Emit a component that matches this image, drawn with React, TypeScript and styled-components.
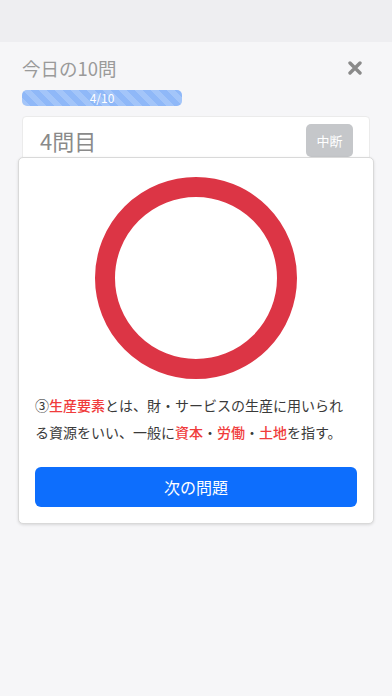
import React from "react";
import styled, { createGlobalStyle } from "styled-components";

const GlobalStyle = createGlobalStyle`
  html, body {
    margin: 0;
    padding: 0;
    background: #f6f6f8;
    font-family: "Noto Sans CJK JP", "Noto Sans", sans-serif;
  }
`;

const Page = styled.div`
  width: 392px;
  min-height: 696px;
  background: #f6f6f8;
  display: flex;
  flex-direction: column;
`;

const StatusBand = styled.div`
  height: 42px;
  background: #eeeef1;
`;

const Body = styled.div`
  position: relative;
  flex: 1;
  padding: 12px 22px 0 22px;
`;

const HeaderRow = styled.div`
  display: flex;
  align-items: center;
  justify-content: space-between;
  height: 28px;
`;

const Title = styled.h1`
  margin: 0;
  font-size: 18.5px;
  font-weight: 400;
  color: #9a9a9a;
`;

const CloseButton = styled.button`
  border: none;
  background: none;
  padding: 0;
  margin-right: 7px;
  width: 16px;
  height: 16px;
  display: flex;
  align-items: center;
  justify-content: center;
`;

const Progress = styled.div`
  margin-top: 8px;
  width: 160px;
  height: 16px;
  border-radius: 5px;
  background-color: #8fb8f8;
  background-image: linear-gradient(
    45deg,
    rgba(255, 255, 255, 0.18) 25%,
    transparent 25%,
    transparent 50%,
    rgba(255, 255, 255, 0.18) 50%,
    rgba(255, 255, 255, 0.18) 75%,
    transparent 75%,
    transparent
  );
  background-size: 16px 16px;
  color: #fff;
  font-size: 12px;
  line-height: 16px;
  text-align: center;
`;

const QuizCard = styled.div`
  margin-top: 10px;
  height: 80px;
  background: #fff;
  border: 1px solid #ebebeb;
  border-radius: 4px;
  display: flex;
  justify-content: space-between;
  align-items: flex-start;
  padding: 7px 16px 0 17px;
`;

const QuestionNo = styled.div`
  font-size: 22px;
  color: #8a8a8a;
  line-height: 32px;
`;

const PauseButton = styled.button`
  width: 47px;
  height: 33px;
  border: none;
  border-radius: 5px;
  background: #c5c7ca;
  color: #fff;
  font-family: inherit;
  font-size: 13px;
  padding: 0;
`;

const Modal = styled.div`
  position: absolute;
  top: 115px;
  left: 18px;
  width: 356px;
  box-sizing: border-box;
  background: #fff;
  border: 1px solid #d9d9d9;
  border-radius: 5px;
  box-shadow: 0 1px 3px rgba(0, 0, 0, 0.12);
  padding: 19px 16px 16px 16px;
  display: flex;
  flex-direction: column;
  align-items: center;
`;

const Ring = styled.div`
  width: 202px;
  height: 202px;
  box-sizing: border-box;
  border-radius: 50%;
  border: 20px solid #dc3545;
`;

const Explanation = styled.p`
  align-self: stretch;
  margin: 13px 6px 0 0;
  font-size: 14px;
  line-height: 27px;
  color: #3a3a3a;
`;

const Hl = styled.span`
  color: #f03c3c;
  font-weight: 500;
`;

const NextButton = styled.button`
  align-self: stretch;
  margin-top: 21px;
  height: 40px;
  border: none;
  border-radius: 6px;
  background: #0d6efd;
  color: #fff;
  font-family: inherit;
  font-size: 16px;
`;

export default function App() {
  return (
    <>
      <GlobalStyle />
      <Page>
        <StatusBand />
        <Body>
          <HeaderRow>
            <Title>今日の10問</Title>
            <CloseButton aria-label="閉じる">
              <svg width="14" height="14" viewBox="0 0 14 14">
                <path
                  d="M2 2 L12 12 M12 2 L2 12"
                  stroke="#8a8a8a"
                  strokeWidth="3.4"
                  strokeLinecap="round"
                />
              </svg>
            </CloseButton>
          </HeaderRow>
          <Progress>4/10</Progress>
          <QuizCard>
            <QuestionNo>4問目</QuestionNo>
            <PauseButton>中断</PauseButton>
          </QuizCard>
          <Modal>
            <Ring />
            <Explanation>
              ③<Hl>生産要素</Hl>とは、財・サービスの生産に用いられる資源をいい、一般に
              <Hl>資本</Hl>・<Hl>労働</Hl>・<Hl>土地</Hl>を指す。
            </Explanation>
            <NextButton>次の問題</NextButton>
          </Modal>
        </Body>
      </Page>
    </>
  );
}
